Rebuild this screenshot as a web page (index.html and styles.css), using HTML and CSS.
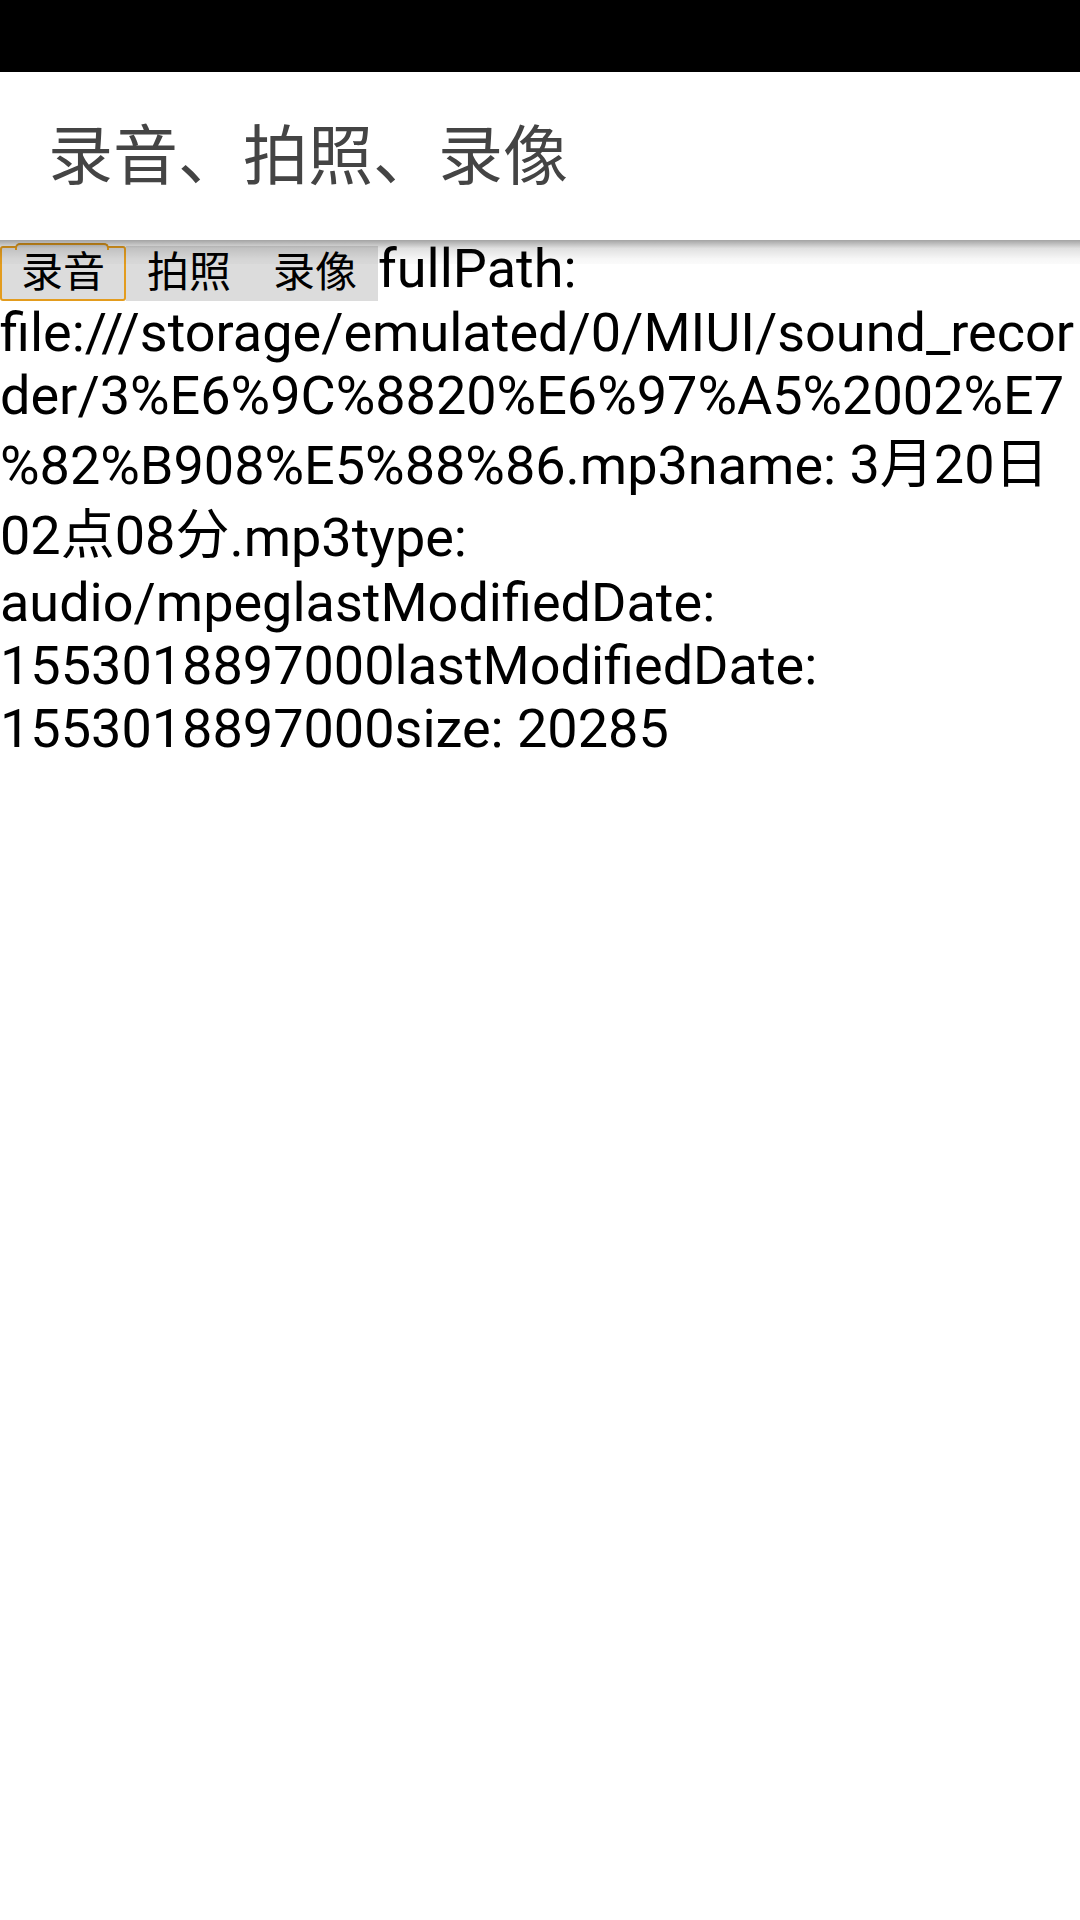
FILE: index.html
```html
<!DOCTYPE html>
<html lang="zh-CN">
<head>
<meta charset="utf-8">
<title>录音、拍照、录像</title>
<link rel="stylesheet" href="styles.css">
</head>
<body>
<div class="statusbar"></div>
<header class="appbar">
  <h1 class="title">录音、拍照、录像</h1>
</header>
<main class="content">
  <p class="info"><span class="btns"><button class="btn btn-focus">录音</button><button class="btn">拍照</button><button class="btn">录像</button></span>fullPath: file:///storage/emulated/0/MIUI/sound_recorder/3%E6%9C%8820%E6%97%A5%2002%E7%82%B908%E5%88%86.mp3name: <span class="cjk-a">3月20日</span><span class="cjk-b">02点08分</span>.mp3type: audio/mpeglastModifiedDate: 1553018897000lastModifiedDate: 1553018897000size: 20285</p>
</main>
</body>
</html>
```
FILE: styles.css
```css
html, body {
  margin: 0;
  padding: 0;
  background: #ffffff;
}

body {
  width: 1080px;
  min-height: 1920px;
  font-family: Roboto, "Noto Sans CJK SC", sans-serif;
  color: #000000;
}

.statusbar {
  height: 72px;
  background: #000000;
}

.appbar {
  position: relative;
  z-index: 2;
  height: 168px;
  box-sizing: border-box;
  background: #ffffff;
  display: flex;
  align-items: center;
  padding: 0 0 10px 48px;
}

.appbar::after {
  content: "";
  position: absolute;
  left: 0;
  right: 0;
  top: 100%;
  height: 24px;
  background: linear-gradient(rgba(0, 0, 0, 0.36), rgba(0, 0, 0, 0.12) 35%, rgba(0, 0, 0, 0.03) 80%, rgba(0, 0, 0, 0.02));
  pointer-events: none;
}

.title {
  margin: 0;
  font-family: "Noto Sans CJK SC", sans-serif;
  font-weight: 400;
  font-size: 65px;
  line-height: 1;
  color: #444444;
}

.content {
  position: relative;
  z-index: 1;
}

.info {
  margin: -3px 0 0;
  font-size: 54px;
  line-height: 63.3px;
  overflow-wrap: anywhere;
}

.btns {
  display: inline-flex;
  align-items: baseline;
}

.btn {
  position: relative;
  font-family: "Noto Sans CJK SC", sans-serif;
  font-size: 42px;
  line-height: 42px;
  height: 55px;
  padding: 0 19px 9px;
  margin: 0;
  border: 2px solid transparent;
  background: #dcdcdc;
  color: #000000;
  vertical-align: baseline;
}

.btn-focus {
  border-color: #e39c1e;
  border-radius: 3px;
}

.btn-focus::before {
  content: "";
  position: absolute;
  top: -5px;
  left: 13px;
  right: 15px;
  height: 5px;
  border: 2px solid #e39c1e;
  border-bottom: none;
  border-radius: 5px 5px 0 0;
  background: #dcdcdc;
}

.cjk-a {
  line-height: 73px;
  vertical-align: 1px;
}

.cjk-b {
  line-height: 70px;
  vertical-align: 2px;
}
```
